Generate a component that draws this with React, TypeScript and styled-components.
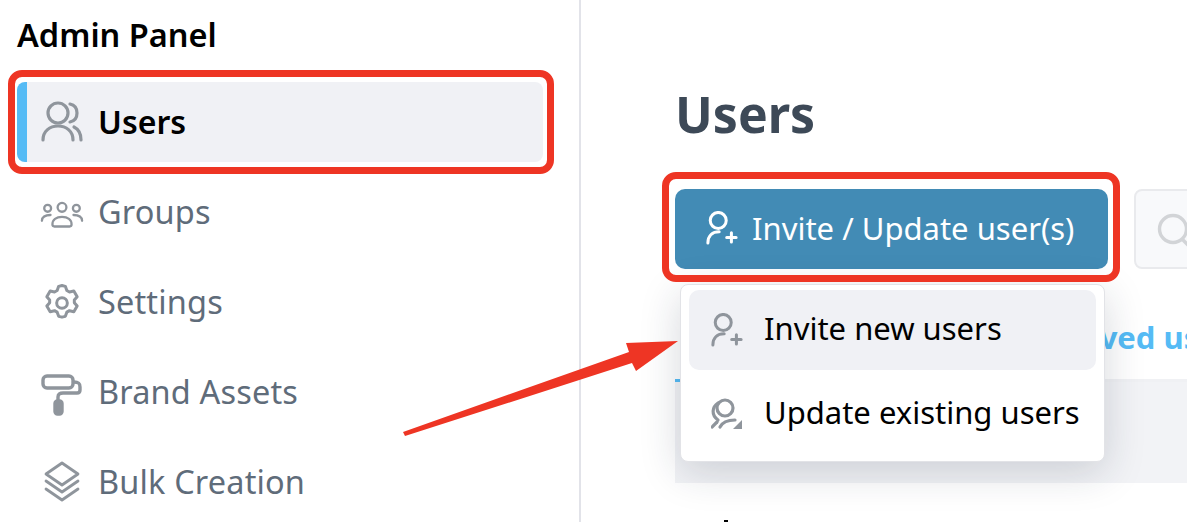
import React from 'react';
import styled, { createGlobalStyle } from 'styled-components';

const GlobalStyle = createGlobalStyle`
    html, body {
        margin:0;
        padding:0;
        background:#fff;
        overflow:hidden;
    }
    body {
        font-family:"Noto Sans", "Open Sans", sans-serif;
    }
`

const UsersIcon = () => (
    <svg width="42" height="42" viewBox="0 0 42 42" fill="none" stroke="#8f959c" strokeWidth="3.2" strokeLinecap="round">
        <circle cx="17" cy="13" r="10" />
        <path d="M2 40c0-9 7-14 15-14s15 5 15 14" />
        <path d="M29 4c5 1 7 5 7 9s-2 8-7 9" />
        <path d="M33 27c4 2 7 7 7 13" />
    </svg>
);

const GroupsIcon = () => (
    <svg width="44" height="30" viewBox="0 0 46 30" fill="none" stroke="#8f959c" strokeWidth="2.4" strokeLinecap="round">
        <circle cx="8" cy="8" r="3.6" />
        <circle cx="23" cy="7" r="4.6" />
        <circle cx="38" cy="8" r="3.6" />
        <path d="M2 21c0-4 3-6 9-6" />
        <path d="M44 21c0-4-3-6-9-6" />
        <path d="M13 25c0-5 4-8 10-8s10 3 10 8c0 1-1 2-2 2H15c-1 0-2-1-2-2z" />
    </svg>
);

const GearIcon = () => (
    <svg width="40" height="40" viewBox="0 0 24 24" fill="none" stroke="#8f959c" strokeWidth="1.8" strokeLinecap="round" strokeLinejoin="round">
        <path d="M12 1.5l2 .5.9 2.5 1.6.9 2.6-.6 2 3.4-1.7 2v1.6l1.7 2-2 3.4-2.6-.6-1.6.9-.9 2.5-2 .5-2-.5-.9-2.5-1.6-.9-2.6.6-2-3.4 1.7-2v-1.6l-1.7-2 2-3.4 2.6.6 1.6-.9.9-2.5z" />
        <circle cx="12" cy="12" r="3.2" />
    </svg>
);

const RollerIcon = () => (
    <svg width="42" height="42" viewBox="0 0 42 42" fill="none" stroke="#8f959c" strokeWidth="3.4" strokeLinecap="round" strokeLinejoin="round">
        <rect x="2" y="2" width="30" height="12" rx="4" />
        <path d="M33 8c4 0 6 1 6 5v3c0 2-1 3-3 3H22c-3 0-5 1-5 4v4" />
        <rect x="14" y="27" width="7" height="13" rx="2.5" fill="#8f959c" />
    </svg>
);

const LayersIcon = () => (
    <svg width="36" height="42" viewBox="0 0 36 42" fill="none" stroke="#8f959c" strokeWidth="2.8" strokeLinejoin="round" strokeLinecap="round">
        <path d="M18 2L34 13 18 24 2 13z" />
        <path d="M2 20l16 11 16-11" />
        <path d="M2 28l16 11 16-11" />
    </svg>
);

const InviteIcon = ({ color }: { color: string }) => (
    <svg width="32" height="34" viewBox="0 0 34 36" fill="none" stroke={color} strokeWidth="3.2" strokeLinecap="round">
        <circle cx="13" cy="10" r="8.5" />
        <path d="M2 34c0-8 5-12 12-12" />
        <path d="M22 28h10M27 23v10" />
    </svg>
);

const UpdateIcon = () => (
    <svg width="34" height="36" viewBox="0 0 34 36" fill="none" stroke="#8f959c" strokeWidth="3.2" strokeLinecap="round">
        <circle cx="14" cy="12" r="8" />
        <path d="M7 7C1 11 0 19 7 24" />
        <path d="M9 31c2-4 7-7 15-7" />
        <path d="M1 31l5-5" />
        <path d="M22 33h9v-9z" fill="#8f959c" stroke="none" />
    </svg>
);

const SearchIcon = () => (
    <svg width="44" height="44" viewBox="0 0 44 44" fill="none" stroke="#d2d4d7" strokeWidth="3.4" strokeLinecap="round">
        <circle cx="17" cy="17" r="13.5" />
        <path d="M27 28l10 10" />
    </svg>
);

const navItems = [
    { label: 'Groups', icon: <GroupsIcon />, dy: 4 },
    { label: 'Settings', icon: <GearIcon />, dy: 2 },
    { label: 'Brand Assets', icon: <RollerIcon />, dy: 4 },
    { label: 'Bulk Creation', icon: <LayersIcon />, dy: 1 },
];

const App = () => {
    return (
        <Page>
            <GlobalStyle />
            <Sidebar>
                <PanelTitle>Admin Panel</PanelTitle>
                <Nav>
                    <NavItem $active>
                        <RedFrame $inset="-12px -11px -12px -19px" />
                        <IconSlot><UsersIcon /></IconSlot>
                        Users
                    </NavItem>
                    {navItems.map((item) => (
                        <NavItem key={item.label}>
                            <IconSlot $dy={item.dy}>{item.icon}</IconSlot>
                            {item.label}
                        </NavItem>
                    ))}
                </Nav>
            </Sidebar>
            <Main>
                <Heading>Users</Heading>
                <Toolbar>
                    <InviteButton>
                        <RedFrame $inset="-17px -12px -13px -13px" />
                        <InviteIcon color="#ffffff" />
                        Invite / Update user(s)
                        <Menu>
                            <MenuItem $hovered>
                                <MenuIcon><InviteIcon color="#8f959c" /></MenuIcon>
                                Invite new users
                            </MenuItem>
                            <MenuItem>
                                <MenuIcon><UpdateIcon /></MenuIcon>
                                Update existing users
                            </MenuItem>
                        </Menu>
                    </InviteButton>
                    <SearchBox><SearchIcon /></SearchBox>
                </Toolbar>
                <Tabs>
                    <Tab>Approved users</Tab>
                </Tabs>
                <TableHead />
                <CutOffDot />
            </Main>
            <Arrow viewBox="0 0 290 104" width="290" height="104">
                <path d="M2 95L228 15 225 6 277 4 235 34 231 26 4 99z" fill="#ee3524" />
            </Arrow>
        </Page>
    );
};

const Page = styled.div`
    position:relative;
    display:flex;
    width:1187px;
    height:522px;
    overflow:hidden;
    background:#fff;
`
const Sidebar = styled.aside`
    box-sizing:border-box;
    width:581px;
    height:522px;
    flex-shrink:0;
    padding:13px 36px 0 17px;
    border-right:2px solid #e2e3e9;
`
const PanelTitle = styled.h2`
    margin:0 0 25px;
    font-size:32.5px;
    line-height:44px;
    font-weight:600;
    color:#000;
`
const Nav = styled.nav`
    display:flex;
    flex-direction:column;
    gap:10px;
`
const NavItem = styled.div<{ $active?: boolean }>`
    position:relative;
    box-sizing:border-box;
    display:flex;
    align-items:center;
    gap:14px;
    height:80px;
    padding-left:${({ $active }) => ($active ? '13px' : '23px')};
    padding-bottom:2px;
    border-left:${({ $active }) => ($active ? '10px solid #55bbf5' : 'none')};
    border-radius:8px;
    background:${({ $active }) => ($active ? '#f0f1f5' : 'transparent')};
    font-size:${({ $active }) => ($active ? '32px' : '32.5px')};
    font-weight:${({ $active }) => ($active ? 600 : 400)};
    letter-spacing:${({ $active }) => ($active ? '0' : '0.15px')};
    color:${({ $active }) => ($active ? '#000' : '#5f6c7a')};
`
const IconSlot = styled.span<{ $dy?: number }>`
    display:flex;
    align-items:center;
    justify-content:center;
    width:44px;
    transform:translateY(${({ $dy }) => $dy ?? 0}px);
`
const RedFrame = styled.span<{ $inset: string }>`
    position:absolute;
    z-index:3;
    inset:${({ $inset }) => $inset};
    border:7px solid #ee3524;
    border-radius:14px;
    pointer-events:none;
`
const Main = styled.main`
    flex:1;
    min-width:0;
    padding:82px 0 0 94px;
`
const Heading = styled.h1`
    margin:0 0 43px;
    font-size:50px;
    line-height:64px;
    font-weight:700;
    color:#3d4957;
`
const Toolbar = styled.div`
    display:flex;
    gap:26px;
`
const InviteButton = styled.div`
    position:relative;
    box-sizing:border-box;
    flex-shrink:0;
    display:flex;
    align-items:center;
    gap:14px;
    width:433px;
    height:80px;
    padding:0 0 2px 31px;
    border-radius:10px;
    background:#428bb5;
    color:#fff;
    font-size:31px;
    white-space:nowrap;
`
const SearchBox = styled.div`
    box-sizing:border-box;
    flex-shrink:0;
    display:flex;
    align-items:flex-start;
    width:200px;
    height:80px;
    padding:21px 0 0 20px;
    border:2px solid #e9eaed;
    border-radius:8px;
    background:#f8f9fb;
`
const Menu = styled.div`
    position:absolute;
    z-index:2;
    top:95px;
    left:5px;
    box-sizing:border-box;
    width:425px;
    height:178px;
    padding:5px 8px 4px 8px;
    border-radius:8px;
    background:#fff;
    border:1px solid #e2e3e7;
    box-shadow:0 10px 40px rgba(30, 40, 60, 0.18);
`
const MenuItem = styled.div<{ $hovered?: boolean }>`
    box-sizing:border-box;
    display:flex;
    align-items:center;
    gap:19px;
    height:80px;
    margin-bottom:4px;
    padding:0 0 4px 22px;
    border-radius:10px;
    background:${({ $hovered }) => ($hovered ? '#f0f1f5' : 'transparent')};
    color:#000;
    font-size:31px;
`
const MenuIcon = styled.span`
    display:flex;
    width:34px;
    transform:translateY(2px);
`
const Tabs = styled.div`
    position:relative;
    box-sizing:border-box;
    display:flex;
    align-items:center;
    height:113px;
    padding-top:26px;
    border-bottom:3px solid #f0f1f4;

    &::after {
        content:"";
        position:absolute;
        left:0;
        bottom:-3px;
        width:120px;
        height:3px;
        background:#55bbf5;
    }
`
const Tab = styled.span`
    margin-left:332px;
    font-size:31px;
    font-weight:700;
    color:#55bbf5;
    white-space:nowrap;
`
const TableHead = styled.div`
    height:101px;
    background:#f2f3f6;
`
const CutOffDot = styled.div`
    width:4px;
    height:2px;
    margin:37px 0 0 49px;
    background:#000;
`
const Arrow = styled.svg`
    position:absolute;
    z-index:3;
    left:401px;
    top:337px;
`

export default App;
